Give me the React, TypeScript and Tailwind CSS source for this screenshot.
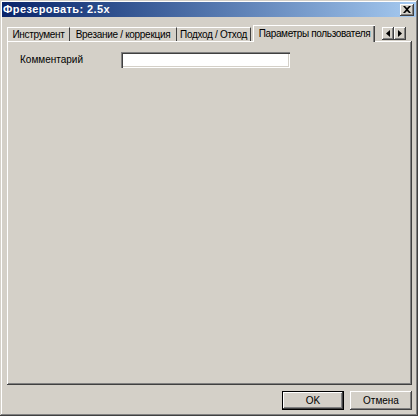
import React from "react";

const raised =
  "shadow-[inset_-1px_-1px_#404040,inset_1px_1px_#ffffff,inset_-2px_-2px_#808080,inset_2px_2px_#d4d0c8]";

function Tab({ label, w, first }: { label: string; w: number; first?: boolean }) {
  return (
    <div
      className={`h-[14px] flex items-center justify-center whitespace-nowrap border-t border-t-white border-r border-r-[#404040] ${
        first ? "border-l border-l-white" : ""
      } text-[10px] tracking-[-0.3px] leading-none text-black`}
      style={{ width: w }}
    >
      {label}
    </div>
  );
}

export default function App() {
  return (
    <div
      className="w-[418px] h-[416px] bg-[#d4d0c8] p-[2px] flex flex-col shadow-[inset_-1px_-1px_#404040,inset_1px_1px_#d4d0c8,inset_-2px_-2px_#808080,inset_2px_2px_#ffffff]"
      style={{ fontFamily: '"Liberation Sans", Arial, sans-serif' }}
    >
      {/* title bar */}
      <div className="h-[15px] flex items-center justify-between pl-[1px] pr-[2px] bg-gradient-to-r from-[#0a246a] to-[#a6caf0]">
        <span className="text-white font-bold text-[11px] tracking-[0.4px] leading-none whitespace-nowrap">Фрезеровать: 2.5x</span>
        <div className={`w-[14px] h-[12px] bg-[#d4d0c8] ${raised} flex items-center justify-center`}>
          <svg width="8" height="7" viewBox="0 0 8 7">
            <path d="M0 0h2l2 2 2-2h2L5 3.5 8 7H6L4 5 2 7H0l3-3.5z" fill="#000" />
          </svg>
        </div>
      </div>

      {/* tabs */}
      <div className="mt-[8px] ml-[5px] flex items-end h-[16px] relative z-10">
        <Tab label="Инструмент" w={63} first />
        <Tab label="Врезание / коррекция" w={107} />
        <Tab label="Подход / Отход" w={74} />
        <div className="ml-[2px] w-[122px] h-[17px] -mb-[1px] bg-[#d4d0c8] border-t border-l border-white shadow-[inset_-1px_0_#404040,inset_-2px_0_#808080] flex items-start justify-center pt-[3px] whitespace-nowrap text-[10px] tracking-[-0.35px] leading-none text-black">
          Параметры пользователя
        </div>
        <div className="ml-[7px] mb-[1px] flex self-end">
          <div className={`w-[12px] h-[13px] bg-[#d4d0c8] ${raised} flex items-center justify-center`}>
            <svg width="4" height="7" viewBox="0 0 4 7">
              <path d="M4 0v7L0 3.5z" fill="#000" />
            </svg>
          </div>
          <div className={`w-[12px] h-[13px] bg-[#d4d0c8] ${raised} flex items-center justify-center`}>
            <svg width="4" height="7" viewBox="0 0 4 7">
              <path d="M0 0v7l4-3.5z" fill="#000" />
            </svg>
          </div>
        </div>
      </div>

      {/* panel */}
      <div className="ml-[5px] mr-[4px] h-[344px] bg-[#d4d0c8] shadow-[inset_-1px_-1px_#404040,inset_1px_1px_#ffffff,inset_-2px_-2px_#808080] pt-[11px] pl-[13px]">
        <div className="flex items-center">
          <span className="w-[101px] text-[10px] leading-none text-black whitespace-nowrap">Комментарий</span>
          <div className="w-[169px] h-[16px] bg-white shadow-[inset_1px_1px_#808080,inset_2px_2px_#404040,inset_-1px_-1px_#ffffff,inset_-2px_-2px_#d4d0c8]" />
        </div>
      </div>

      {/* buttons */}
      <div className="mt-[6px] mr-[4px] flex justify-end gap-[6px]">
        <div className="w-[62px] h-[19px] bg-[#d4d0c8] border border-black shadow-[inset_-1px_-1px_#404040,inset_1px_1px_#ffffff,inset_-2px_-2px_#808080] flex items-center justify-center text-[10px] leading-none text-black">
          OK
        </div>
        <div className={`w-[62px] h-[19px] bg-[#d4d0c8] ${raised} flex items-center justify-center text-[10px] leading-none text-black`}>
          Отмена
        </div>
      </div>
    </div>
  );
}
